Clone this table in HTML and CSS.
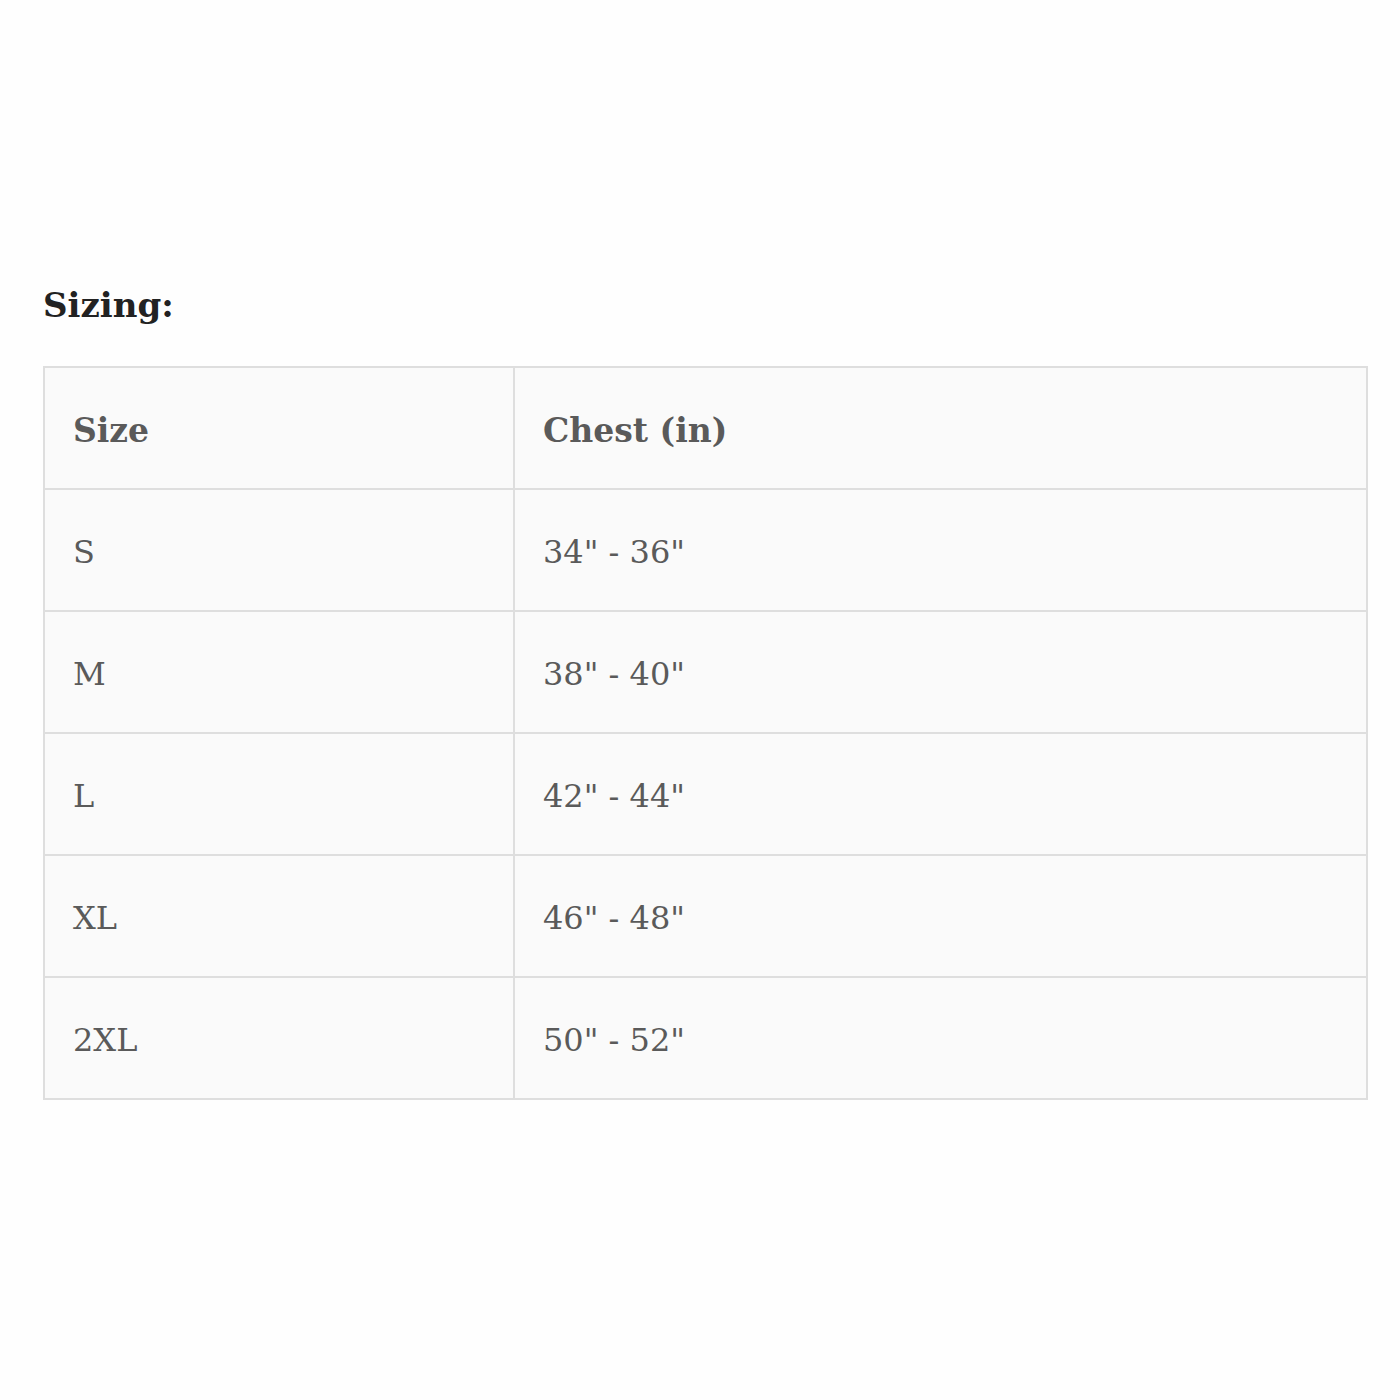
FILE: index.html
```html
<!DOCTYPE html>
<html>
<head>
<meta charset="utf-8">
<link rel="stylesheet" href="styles.css">
</head>
<body>
<div class="page">
  <h2 class="title">Sizing:</h2>
  <table class="sizes">
    <thead>
      <tr><th class="c1">Size</th><th>Chest (in)</th></tr>
    </thead>
    <tbody>
      <tr><td class="c1">S</td><td>34" - 36"</td></tr>
      <tr><td class="c1">M</td><td>38" - 40"</td></tr>
      <tr><td class="c1">L</td><td>42" - 44"</td></tr>
      <tr><td class="c1">XL</td><td>46" - 48"</td></tr>
      <tr><td class="c1">2XL</td><td>50" - 52"</td></tr>
    </tbody>
  </table>
</div>
</body>
</html>
```
FILE: styles.css
```css
html, body {
  margin: 0;
  padding: 0;
  background: #fefefe;
}
.page {
  padding: 280px 32px 0 43px;
  font-family: "DejaVu Serif", "Liberation Serif", serif;
}
.title {
  margin: 0 0 36px 0;
  font-size: 34px;
  line-height: 50px;
  font-weight: bold;
  color: #222;
}
.sizes {
  width: 1325px;
  border-collapse: collapse;
  border: 2px solid #d2d2d2;
  background: #fafafa;
  color: #5a5a5a;
}
.sizes th, .sizes td {
  height: 116px;
  padding: 4px 0 0 28px;
  border: 2px solid #dedede;
  text-align: left;
  font-size: 32px;
  vertical-align: middle;
}
.sizes th {
  font-weight: bold;
  font-size: 33px;
}
.c1 {
  width: 440px;
}
```
